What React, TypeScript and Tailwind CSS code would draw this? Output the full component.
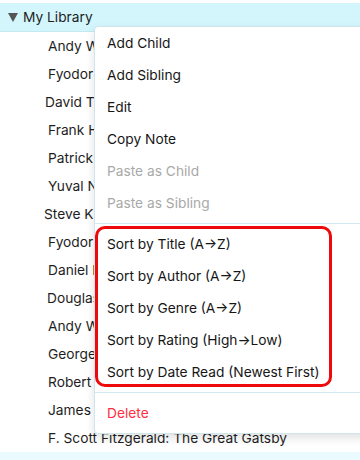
import React from "react";

const BOOKS: { text: string; pad: string }[] = [
  { text: "Andy Weir: Project Hail Mary", pad: "pl-[48px]" },
  { text: "Fyodor Dostoevsky: Crime and Punishment", pad: "pl-[48px]" },
  { text: "David Thomas: The Pragmatic Programmer", pad: "pl-[45px]" },
  { text: "Frank Herbert: Dune", pad: "pl-[48px]" },
  { text: "Patrick Rothfuss: The Name of the Wind", pad: "pl-[48px]" },
  { text: "Yuval Noah Harari: Sapiens", pad: "pl-[48px]" },
  { text: "Steve Krug: Don't Make Me Think", pad: "pl-[44px]" },
  { text: "Fyodor Dostoevsky: The Idiot", pad: "pl-[48px]" },
  { text: "Daniel Kahneman: Thinking, Fast and Slow", pad: "pl-[48px]" },
  { text: "Douglas Adams: The Hitchhiker's Guide", pad: "pl-[47px]" },
  { text: "Andy Weir: The Martian", pad: "pl-[48px]" },
  { text: "George Orwell: 1984", pad: "pl-[48px]" },
  { text: "Robert C. Martin: Clean Code", pad: "pl-[48px]" },
  { text: "James Clear: Atomic Habits", pad: "pl-[48px]" },
  { text: "F. Scott Fitzgerald: The Great Gatsby", pad: "pl-[48px]" },
];

type Item = { label: string; kind?: "disabled" | "danger" };

const GROUP_A: Item[] = [
  { label: "Add Child" },
  { label: "Add Sibling" },
  { label: "Edit" },
  { label: "Copy Note" },
  { label: "Paste as Child", kind: "disabled" },
  { label: "Paste as Sibling", kind: "disabled" },
];

const GROUP_SORT: Item[] = [
  { label: "Sort by Title (A\u2192Z)" },
  { label: "Sort by Author (A\u2192Z)" },
  { label: "Sort by Genre (A\u2192Z)" },
  { label: "Sort by Rating (High\u2192Low)" },
  { label: "Sort by Date Read (Newest First)" },
];

function MenuRow({ item }: { item: Item }) {
  const color =
    item.kind === "disabled"
      ? "text-[#a9a9a9]"
      : item.kind === "danger"
        ? "text-[#ff2f3f]"
        : "text-[#161616]";
  return (
    <div className={`h-8 flex items-center pl-3 whitespace-nowrap ${color}`}>
      {item.label}
    </div>
  );
}

export default function App() {
  return (
    <div
      className="relative w-[360px] h-[460px] overflow-hidden bg-white text-[13.75px] text-[#1e1e1e]"
      style={{ fontFamily: 'Inter, "Liberation Sans", Arial, sans-serif' }}
    >
      <div className="pt-[3px]">
        <div className="h-[29px] flex items-center bg-[#d3f6fd] border-b border-[#c4e9f0] pl-2">
          <svg width="10" height="9" viewBox="0 0 10 9" className="mr-[5px]">
            <path d="M0 0 L10 0 L5 9 Z" fill="#555" />
          </svg>
          <span>My Library</span>
        </div>
        {BOOKS.map((b, i) => (
          <div key={i} className={`h-7 flex items-center whitespace-nowrap ${b.pad}`}>
            {b.text}
          </div>
        ))}
        <div className="h-7 bg-[#e9fbfe]" />
      </div>

      {/* context menu */}
      <div className="absolute left-[94px] top-[26px] w-[300px] bg-white border border-[#cfe6ec] rounded-[4px] shadow-[0_4px_10px_rgba(0,0,0,0.12)]">
        {GROUP_A.map((it) => (
          <MenuRow key={it.label} item={it} />
        ))}
        <div className="my-1 h-px bg-[#d2e9ef]" />
        {GROUP_SORT.map((it) => (
          <MenuRow key={it.label} item={it} />
        ))}
        <div className="my-1 h-px bg-[#d2e9ef]" />
        <MenuRow item={{ label: "Delete", kind: "danger" }} />
        <div className="h-1" />
      </div>

      {/* annotation */}
      <div className="absolute left-[95px] top-[226px] w-[237px] h-[161px] border-[3px] border-[#ee0a0a] rounded-[10px] pointer-events-none" />
    </div>
  );
}
